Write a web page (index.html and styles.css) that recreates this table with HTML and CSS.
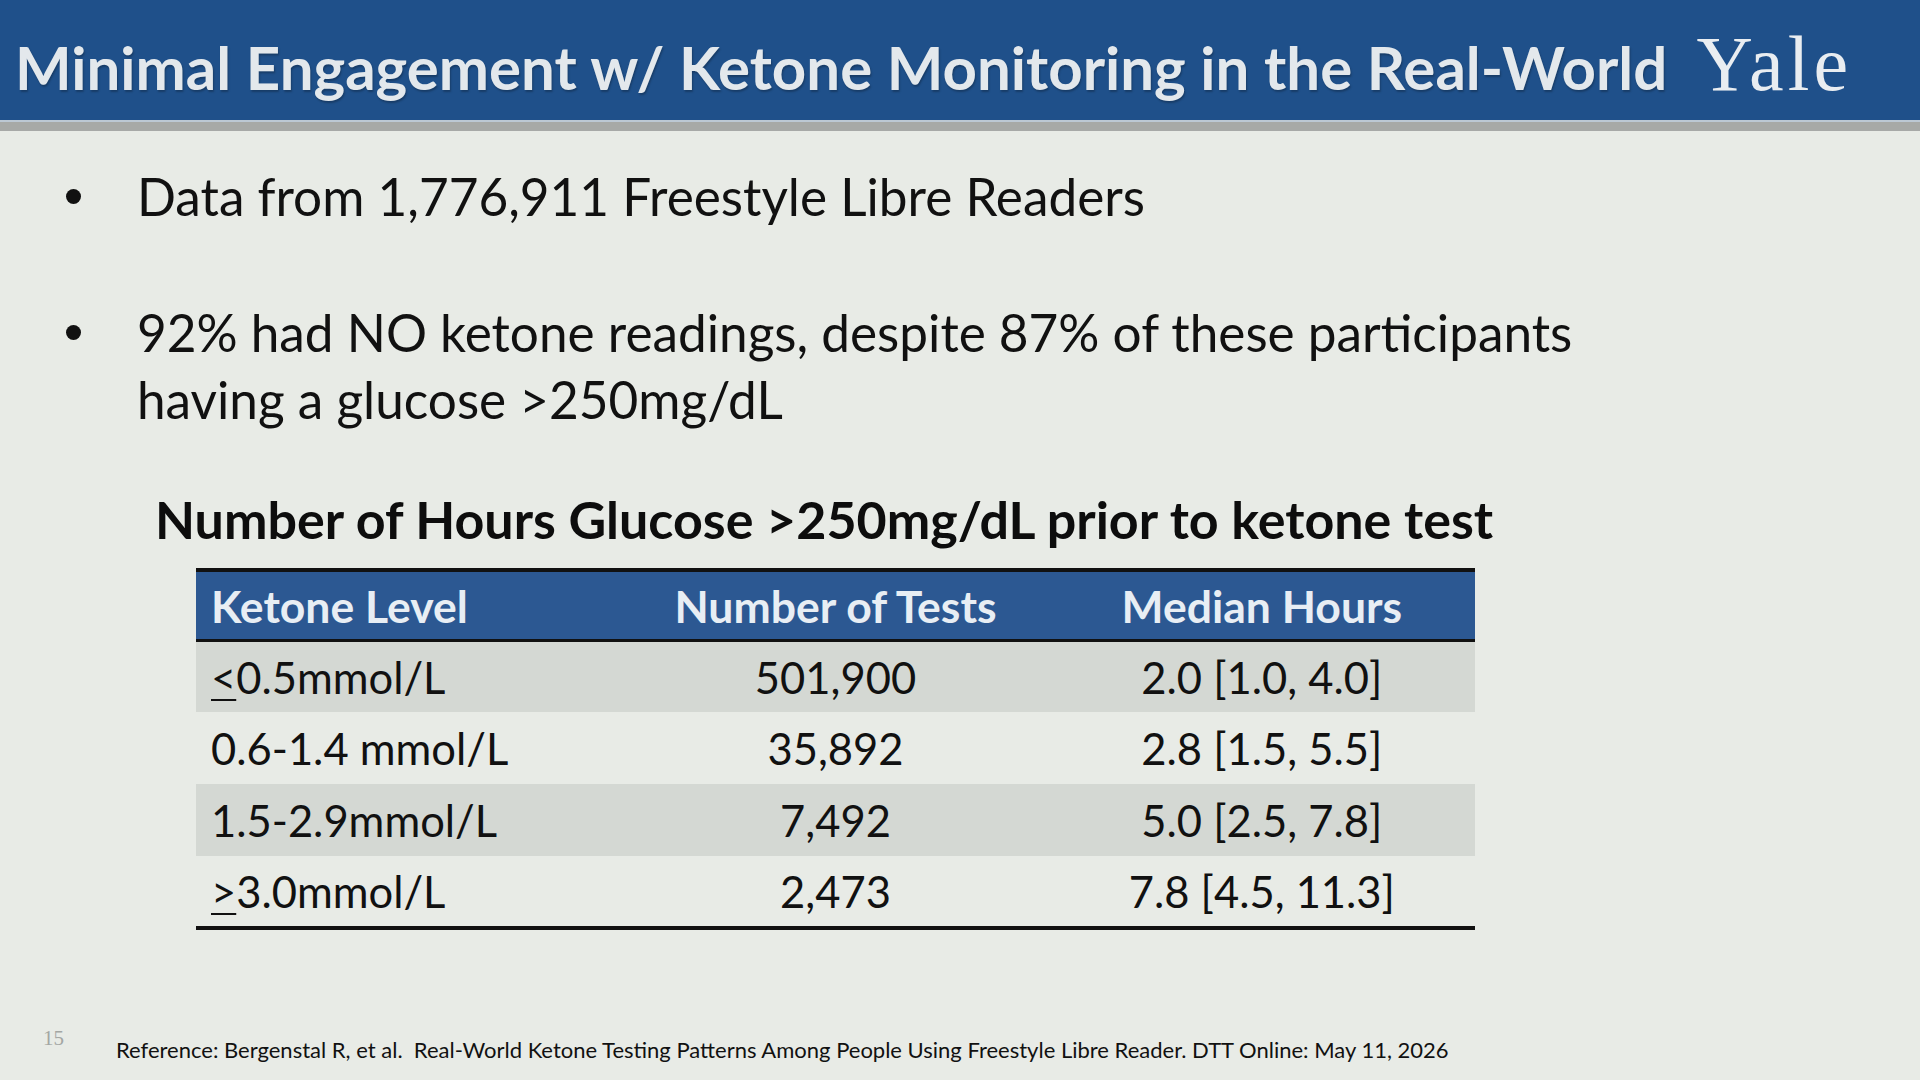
FILE: index.html
```html
<!DOCTYPE html>
<html lang="en">
<head>
<meta charset="utf-8">
<title>Minimal Engagement w/ Ketone Monitoring in the Real-World</title>
<link rel="stylesheet" href="styles.css">
</head>
<body>
<div class="slide">
  <header class="header">
    <h1 class="title">Minimal Engagement w/ Ketone Monitoring in the Real-World</h1>
    <div class="logo">Yale</div>
  </header>
  <div class="stripe"></div>
  <main class="content">
    <ul class="bullets">
      <li class="bullet">Data from 1,776,911 Freestyle Libre Readers</li>
      <li class="bullet second">92% had NO ketone readings, despite 87% of these participants<br>having a glucose &gt;250mg/dL</li>
    </ul>
    <h2 class="table-title">Number of Hours Glucose &gt;250mg/dL prior to ketone test</h2>
    <table class="data">
      <thead>
        <tr>
          <th class="c1">Ketone Level</th>
          <th>Number of Tests</th>
          <th>Median Hours</th>
        </tr>
      </thead>
      <tbody>
        <tr class="odd">
          <td class="c1"><span class="ul">&lt;</span>0.5mmol/L</td>
          <td>501,900</td>
          <td>2.0 [1.0, 4.0]</td>
        </tr>
        <tr>
          <td class="c1">0.6-1.4 mmol/L</td>
          <td>35,892</td>
          <td>2.8 [1.5, 5.5]</td>
        </tr>
        <tr class="odd">
          <td class="c1">1.5-2.9mmol/L</td>
          <td>7,492</td>
          <td>5.0 [2.5, 7.8]</td>
        </tr>
        <tr>
          <td class="c1"><span class="ul">&gt;</span>3.0mmol/L</td>
          <td>2,473</td>
          <td>7.8 [4.5, 11.3]</td>
        </tr>
      </tbody>
    </table>
  </main>
  <footer class="footer">
    <span class="page-num">15</span>
    <span class="reference">Reference: Bergenstal R, et al.&nbsp; Real-World Ketone Testing Patterns Among People Using Freestyle Libre Reader. DTT Online: May 11, 2026</span>
  </footer>
</div>
</body>
</html>
```

FILE: styles.css
```css
* { box-sizing: border-box; }

html, body {
  margin: 0;
  padding: 0;
}

body {
  background: #e8ebe6;
  font-family: Lato, "Open Sans", "Liberation Sans", sans-serif;
  color: #111;
}

.slide {
  width: 1920px;
  height: 1080px;
  overflow: hidden;
  display: flex;
  flex-direction: column;
  background: #e8ebe6;
}

.header {
  height: 120px;
  background: #1f508a;
  display: flex;
  align-items: baseline;
  padding: 30px 68px 0 15px;
}

.title {
  margin: 0;
  font-family: Lato, "Open Sans", sans-serif;
  font-weight: 700;
  font-size: 60px;
  line-height: 68px;
  color: #e3e8ec;
  white-space: nowrap;
  text-shadow: 1px 2px 2px rgba(0, 0, 0, 0.25);
}

.logo {
  margin-left: auto;
  font-family: "Liberation Serif", "Times New Roman", serif;
  font-size: 78px;
  line-height: 68px;
  letter-spacing: 4px;
  color: #e9edf1;
}

.stripe {
  height: 11px;
  background: #a7a9a7;
  border-top: 2px solid #bcc8d4;
}

.content {
  display: flex;
  flex-direction: column;
}

.bullets {
  list-style: none;
  margin: 32px 0 0 0;
  padding: 0;
}

.bullet {
  display: flex;
  font-size: 51.3px;
  line-height: 67px;
  color: #111;
}

.bullet::before {
  content: "";
  flex: none;
  width: 15px;
  height: 15px;
  border-radius: 50%;
  background: #111;
  margin: 26px 56px 0 66px;
}

.bullet.second {
  margin-top: 69px;
}

.table-title {
  margin: 58px 0 0 155px;
  font-size: 52px;
  line-height: 56px;
  font-weight: 700;
  color: #0d0d0d;
  white-space: nowrap;
}

.data {
  margin: 21px 0 0 196px;
  width: 1279px;
  border-collapse: collapse;
  table-layout: fixed;
  border-top: 4px solid #111;
  border-bottom: 4px solid #111;
}

.data th {
  height: 70px;
  background: #2c5892;
  color: #e8eef4;
  font-size: 44.5px;
  font-weight: 700;
  text-align: center;
  vertical-align: middle;
  padding: 0;
  border-bottom: 3px solid #111;
}

.data td {
  height: 72px;
  font-size: 43.5px;
  text-align: center;
  vertical-align: middle;
  padding: 0;
  color: #111;
}

.data .c1 {
  text-align: left;
  padding-left: 15px;
}

.data tr.odd td {
  background: #d4d8d3;
}

.ul {
  text-decoration: underline;
  text-decoration-thickness: 2px;
  text-underline-offset: 5px;
}

.footer {
  display: flex;
  align-items: flex-start;
  margin-top: auto;
  padding: 0 0 17px 43px;
}

.page-num {
  font-family: "Liberation Serif", serif;
  font-size: 21px;
  line-height: 24px;
  color: #a3a6a3;
  width: 73px;
}

.reference {
  margin-top: 11px;
  font-size: 22px;
  line-height: 26px;
  color: #111;
  white-space: nowrap;
}
```
